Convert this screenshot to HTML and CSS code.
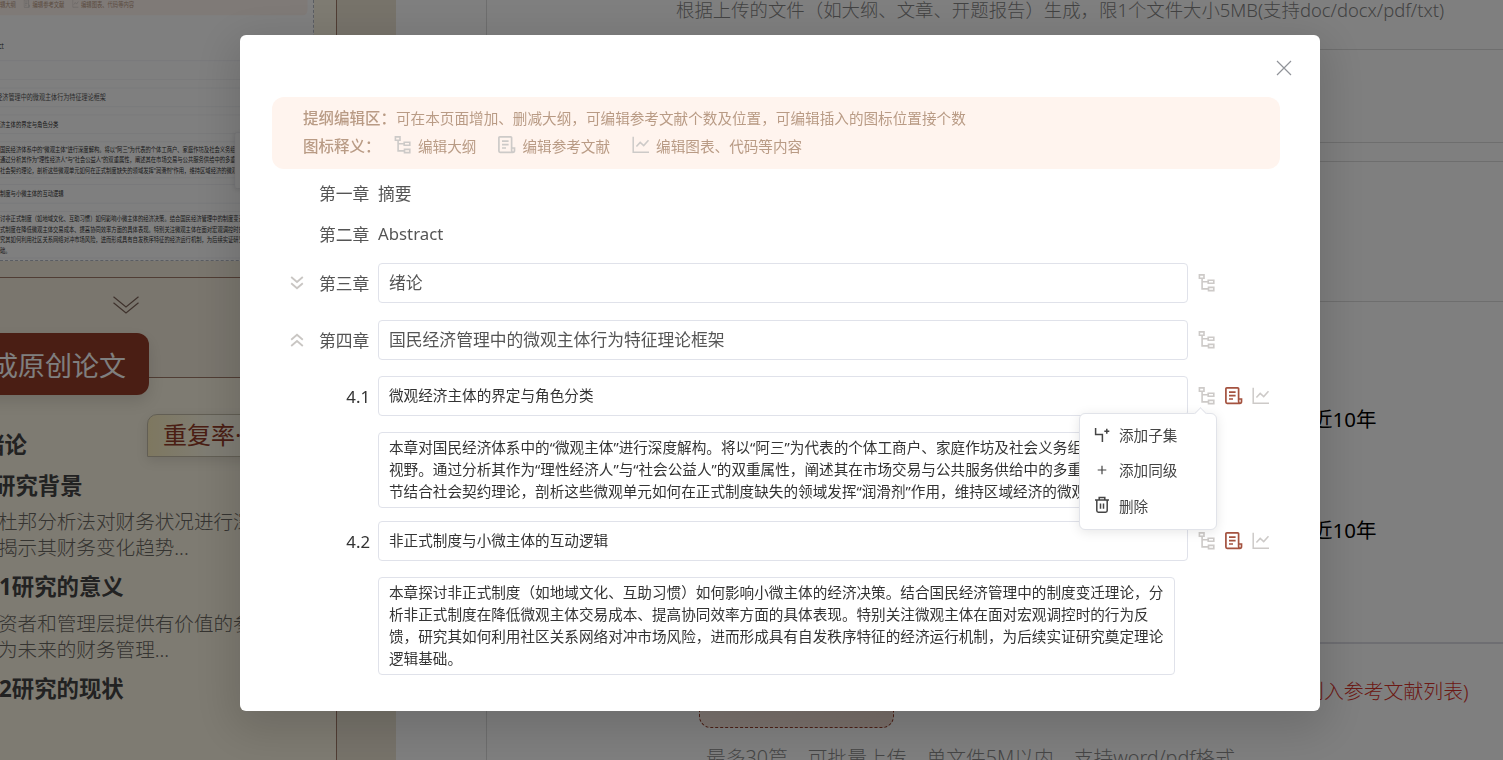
FILE: index.html
```html
<!DOCTYPE html>
<html lang="zh-CN">
<head>
    <meta charset="UTF-8">
    <meta name="viewport" content="width=device-width, initial-scale=1.0">
    <title>提纲编辑</title>
    <link rel="stylesheet" href="styles.css">
</head>
<body>
    <!-- 图标 -->
    <svg class="sprite" width="0" height="0">
        <symbol id="icon-tree" viewBox="0 0 17 18">
            <path d="M.9.9h4.6v3.4H.9zM9.7 6.3h5.6v3H9.7zM10 13.4h5.3v3.2H10zM3.6 4.5v10.4H10M3.6 7.8h6" fill="none" stroke="currentColor" stroke-width="1.6"/>
        </symbol>
        <symbol id="icon-doc" viewBox="0 0 18 18">
            <path d="M13.6 12V1.9Q13.6.9 12.6.9H1.9Q.9.9.9 1.9v13.2q0 1.2 1.2 1.2h12.7q1.7 0 1.7-1.8V12h-2.9v2.6q0 1.4 1.2 1.7M4 5.2h6.6M4 8.6h6.6M4 12h4" fill="none" stroke="currentColor" stroke-width="1.7"/>
        </symbol>
        <symbol id="icon-chart" viewBox="0 0 18 18">
            <path d="M1.2.8v15.4H17M4.4 10.6l3.8-4.2 3.5 3.2 4.8-5.4" fill="none" stroke="currentColor" stroke-width="1.5"/>
        </symbol>
        <symbol id="icon-child" viewBox="0 0 16 16">
            <path d="M1.6 1v6.4h6.8V15M12.8 1.8v5M10.300 4.300h5" fill="none" stroke="currentColor" stroke-width="1.5"/>
        </symbol>
        <symbol id="icon-plus" viewBox="0 0 16 16">
            <path d="M8 3.7v8.6M3.7 8h8.6" fill="none" stroke="currentColor" stroke-width="1.2"/>
        </symbol>
        <symbol id="icon-trash" viewBox="0 0 16 18">
            <path d="M1 4h14M5.2 4V1.6h5.6V4M2.8 4v10.6q0 1.6 1.6 1.6h7.2q1.6 0 1.6-1.6V4M6.5 7.5v5.2M9.5 7.5v5.2" fill="none" stroke="currentColor" stroke-width="1.5"/>
        </symbol>
        <symbol id="icon-down" viewBox="0 0 14 16">
            <path d="M1.2 2l5.8 5 5.8-5M1.2 8.3l5.8 5 5.8-5" fill="none" stroke="currentColor" stroke-width="1.8"/>
        </symbol>
    </svg>

    <div class="page">
        <!-- 左侧 -->
        <aside class="side">
            <div class="side-panel">
                <div class="preview" id="preview"></div>
                <div class="step">
                    <svg class="step-arrow" viewBox="0 0 26 18"><path d="M.5.8L13 11 25.5.8M.5 6.8L13 17 25.5 6.8" fill="none" stroke="currentColor" stroke-width="1.2"/></svg>
                    <div class="step-btn">生成原创论文</div>
                </div>
                <div class="paper">
                    <div class="badge">重复率·</div>
                    <h2>绪论</h2>
                    <h3>研究背景</h3>
                    <p>杜邦分析法对财务状况进行深<br>揭示其财务变化趋势...</p>
                    <h3 class="wide">1研究的意义</h3>
                    <p>资者和管理层提供有价值的参<br>为未来的财务管理...</p>
                    <h3 class="wide">2研究的现状</h3>
                </div>
            </div>
        </aside>

        <!-- 右侧表单 -->
        <main class="form">
            <div class="line upload-tip">根据上传的文件（如大纲、文章、开题报告）生成，限1个文件大小5MB(支持doc/docx/pdf/txt)</div>
            <div class="line blank-a"></div>
            <div class="line blank-b"></div>
            <div class="line blank-c"></div>
            <div class="line years">
                <span>近10年</span>
                <span>近10年</span>
            </div>
            <div class="refs">
                <div class="refs-note">列入参考文献列表)</div>
                <div class="upload-btn"></div>
                <div class="refs-tip">最多30篇，可批量上传，单文件5M以内，支持word/pdf格式</div>
            </div>
        </main>
    </div>

    <!-- 弹窗 -->
    <div class="mask">
        <div class="dialog">
            <svg class="close" viewBox="0 0 16 16"><path d="M1 1l14 14M15 1L1 15" fill="none" stroke="currentColor" stroke-width="1.2"/></svg>
            <div class="outline" id="outline">
                <div class="notice">
                    <div class="notice-row"><b>提纲编辑区：</b><span>可在本页面增加、删减大纲，可编辑参考文献个数及位置，可编辑插入的图标位置接个数</span></div>
                    <div class="notice-row legend">
                        <b>图标释义：</b>
                        <span><svg class="icon"><use href="#icon-tree"/></svg>编辑大纲</span>
                        <span><svg class="icon"><use href="#icon-doc"/></svg>编辑参考文献</span>
                        <span><svg class="icon"><use href="#icon-chart"/></svg>编辑图表、代码等内容</span>
                    </div>
                </div>

                <div class="row plain">
                    <i></i><label>第一章</label><span>摘要</span>
                </div>
                <div class="row plain">
                    <i></i><label>第二章</label><span>Abstract</span>
                </div>
                <div class="row chapter third">
                    <svg class="toggle"><use href="#icon-down"/></svg>
                    <label>第三章</label>
                    <div class="field">绪论</div>
                    <div class="tools"><svg class="icon"><use href="#icon-tree"/></svg></div>
                </div>
                <div class="row chapter">
                    <svg class="toggle up"><use href="#icon-down"/></svg>
                    <label>第四章</label>
                    <div class="field">国民经济管理中的微观主体行为特征理论框架</div>
                    <div class="tools"><svg class="icon"><use href="#icon-tree"/></svg></div>
                </div>
                <div class="row section">
                    <i></i><label>4.1</label>
                    <div class="field">微观经济主体的界定与角色分类</div>
                    <div class="tools">
                        <svg class="icon"><use href="#icon-tree"/></svg>
                        <svg class="icon active"><use href="#icon-doc"/></svg>
                        <svg class="icon"><use href="#icon-chart"/></svg>
                        <div class="menu">
                            <div class="menu-item"><svg><use href="#icon-child"/></svg>添加子集</div>
                            <div class="menu-item"><svg><use href="#icon-plus"/></svg>添加同级</div>
                            <div class="menu-item"><svg><use href="#icon-trash"/></svg>删除</div>
                        </div>
                    </div>
                </div>
                <div class="textarea">本章对国民经济体系中的“微观主体”进行深度解构。将以“阿三”为代表的个体工商户、家庭作坊及社会义务组<br>视野。通过分析其作为“理性经济人”与“社会公益人”的双重属性，阐述其在市场交易与公共服务供给中的多重<br>节结合社会契约理论，剖析这些微观单元如何在正式制度缺失的领域发挥“润滑剂”作用，维持区域经济的微观</div>
                <div class="row section">
                    <i></i><label>4.2</label>
                    <div class="field">非正式制度与小微主体的互动逻辑</div>
                    <div class="tools">
                        <svg class="icon"><use href="#icon-tree"/></svg>
                        <svg class="icon active"><use href="#icon-doc"/></svg>
                        <svg class="icon"><use href="#icon-chart"/></svg>
                    </div>
                </div>
                <div class="textarea tall">本章探讨非正式制度（如地域文化、互助习惯）如何影响小微主体的经济决策。结合国民经济管理中的制度变迁理论，分<br>析非正式制度在降低微观主体交易成本、提高协同效率方面的具体表现。特别关注微观主体在面对宏观调控时的行为反<br>馈，研究其如何利用社区关系网络对冲市场风险，进而形成具有自发秩序特征的经济运行机制，为后续实证研究奠定理论<br>逻辑基础。</div>
            </div>
        </div>
    </div>

    <script src="script.js"></script>
</body>
</html>
```

FILE: styles.css
```css
* {
    box-sizing: border-box;
}

body {
    margin: 0;
    height: 760px;
    overflow: hidden;
    font-family: "Noto Sans", "Noto Sans CJK SC", sans-serif;
    color: #333;
    background: #fff;
}

h2, h3, p {
    margin: 0;
}

.sprite {
    position: absolute;
}

.page {
    display: flex;
    height: 760px;
    overflow: hidden;
    white-space: nowrap;
}

/* 左侧 */
.side {
    width: 396px;
    flex: none;
    background: #eee6d5;
}

.side-panel {
    width: 337px;
    height: 760px;
    overflow: hidden;
    border-right: 1px solid #a07a68;
    background: #fcf6e4;
}

.preview {
    width: 314px;
    height: 261px;
    overflow: hidden;
    background: #fff;
    border-right: 1px dashed #b5bac5;
    border-bottom: 1px dashed #b5bac5;
}

.preview .outline {
    margin: -49px 0 0 -70px;
    transform: scale(0.363, 0.48);
    transform-origin: 0 0;
}

.step {
    height: 101px;
    margin-top: 16px;
    border-top: 1px solid #a07a68;
    border-bottom: 1px solid #a07a68;
    background: #f5eddd;
    box-shadow: 0 -16px #f5eddd;
}

.step-arrow {
    display: block;
    width: 26px;
    height: 18px;
    margin: 18px 0 0 113px;
    color: #7d6459;
}

.step-btn {
    position: relative;
    width: 209px;
    height: 62px;
    margin: 19px 0 0 -60px;
    padding-right: 23px;
    border-radius: 12px;
    background: #943c28;
    box-shadow: 0 6px 16px rgba(0, 0, 0, 0.12);
    color: #fff;
    font-size: 27px;
    line-height: 65px;
    text-align: right;
}

.paper {
    position: relative;
    padding-top: 48px;
}

.badge {
    position: absolute;
    left: 147px;
    top: 36px;
    width: 180px;
    height: 43px;
    padding-left: 15px;
    border: 1px solid #c4bda9;
    border-radius: 10px 0 0 0;
    background: linear-gradient(90deg, #fcefc0, #fffbe9 60px);
    box-shadow: 0 4px 12px rgba(0, 0, 0, 0.1);
    color: #943c28;
    font-size: 24px;
    line-height: 39px;
}

.paper h2,
.paper h3 {
    height: 38px;
    font-size: 22.4px;
    line-height: 38px;
    color: #444;
    font-weight: 700;
}

.paper h2 {
    margin-left: -18px;
}

.paper h3 {
    margin: 3px 0 4px -7px;
}

.paper h3.wide {
    margin: 7px 0 5px -1px;
}

.paper p {
    margin-left: -2px;
    font-size: 19.6px;
    line-height: 26px;
    color: #6b6862;
    font-weight: 300;
}

/* 右侧表单 */
.form {
    flex: 1;
    margin-left: 90px;
    border-left: 1px solid #dcdcdc;
    overflow: hidden;
}

.line {
    border-bottom: 1px solid #dcdcdc;
}

.upload-tip {
    height: 50px;
    padding-left: 189px;
    color: #858585;
    font-size: 18.4px;
    line-height: 19px;
    font-weight: 300;
}

.blank-a {
    height: 93px;
}

.blank-b {
    height: 19px;
}

.blank-c {
    height: 140px;
}

.years {
    display: flex;
    flex-direction: column;
    gap: 81px;
    height: 342px;
    padding: 102px 0 0 825px;
    border-bottom: 2px solid #dcdce4;
    color: #000;
    font-size: 20.5px;
    line-height: 30px;
}

.refs-note {
    padding: 33px 0 0 817px;
    color: #d8332b;
    font-size: 19.9px;
    line-height: 30px;
    font-weight: 300;
}

.upload-btn {
    width: 195px;
    height: 40px;
    margin: -19px 0 0 212px;
    border: 1px dashed #943c28;
    border-radius: 12px;
    background: linear-gradient(160deg, #fdeee6, #eed9cf);
}

.refs-tip {
    margin: 16px 0 0 219px;
    color: #8c8c8c;
    font-size: 19.8px;
    line-height: 28px;
    font-weight: 300;
}

/* 弹窗 */
.mask {
    position: fixed;
    inset: 0;
    background: rgba(0, 0, 0, 0.5);
}

.dialog {
    position: relative;
    width: 1080px;
    height: 676px;
    margin: 35px 0 0 240px;
    border-radius: 6px;
    background: #fff;
    box-shadow: 0 12px 44px 8px rgba(0, 0, 0, 0.14);
}

.close {
    position: absolute;
    top: 25px;
    right: 28px;
    width: 16px;
    height: 16px;
    color: #909399;
}

/* 大纲 */
.outline {
    width: 1080px;
    height: 676px;
    padding: 62px 0 0 32px;
    font-size: 14.62px;
    white-space: nowrap;
}

.notice {
    width: 1008px;
    height: 72px;
    margin-bottom: 3px;
    padding: 6px 0 0 31px;
    border-radius: 12px;
    background: #fff4ee;
    color: #b99b85;
}

.notice-row {
    display: flex;
    align-items: center;
    height: 28px;
}

.notice b {
    width: 93px;
    font-size: 15.5px;
    font-weight: 500;
}

.notice .legend b {
    width: 91px;
}

.legend span {
    display: flex;
    align-items: center;
    margin-right: 22px;
}

.icon {
    width: 18px;
    height: 18px;
    color: #cdcac8;
}

.legend .icon {
    margin-right: 6px;
}

.row {
    display: grid;
    grid-template-columns: 47px 59px 810px auto;
    align-items: center;
    height: 40px;
}

.plain {
    height: 41px;
}

.row label,
.plain,
.chapter .field {
    font-size: 16.8px;
    color: #555;
}

.chapter,
.section {
    margin-bottom: 16px;
}

.third {
    margin-top: 9px;
    margin-bottom: 17px;
}

.toggle {
    width: 14px;
    height: 16px;
    margin-left: 18px;
    color: #c9c6c3;
}

.up {
    transform: rotate(180deg);
}

.section label {
    padding-right: 8px;
    text-align: right;
    color: #333;
}

.field,
.textarea {
    border: 1px solid #e0e2ea;
    border-radius: 4px;
    padding-left: 10px;
    color: #333;
    background: #fff;
}

.field {
    height: 40px;
    line-height: 37px;
}

.textarea {
    width: 797px;
    height: 76px;
    margin: 0 0 13px 106px;
    padding-top: 3px;
    line-height: 22px;
}

.tall {
    height: 98px;
}

.tools {
    display: flex;
    gap: 9px;
    margin-left: 10px;
    position: relative;
}

.tools .active {
    color: #a4523f;
}

/* 下拉菜单 */
.menu {
    position: absolute;
    left: -119px;
    top: 26px;
    z-index: 2;
    width: 138px;
    height: 117px;
    padding-top: 3px;
    border: 1px solid #e1e3e9;
    border-radius: 6px;
    background: #fff;
    box-shadow: 0 2px 12px rgba(0, 0, 0, 0.1);
}

.menu::before {
    content: "";
    position: absolute;
    left: 116px;
    top: -5px;
    width: 8px;
    height: 8px;
    border: 1px solid #e1e3e9;
    border-right: 0;
    border-bottom: 0;
    background: #fff;
    transform: rotate(45deg);
}

.menu-item {
    display: flex;
    align-items: center;
    gap: 9px;
    height: 35.3px;
    padding-left: 14px;
    color: #444;
}

.menu-item svg {
    width: 16px;
    height: 18px;
}
```

FILE: script.js
```js
// 左侧缩略图与弹窗中的大纲内容一致
const outline = document.getElementById('outline').cloneNode(true);
outline.removeAttribute('id');
document.getElementById('preview').appendChild(outline);
```
